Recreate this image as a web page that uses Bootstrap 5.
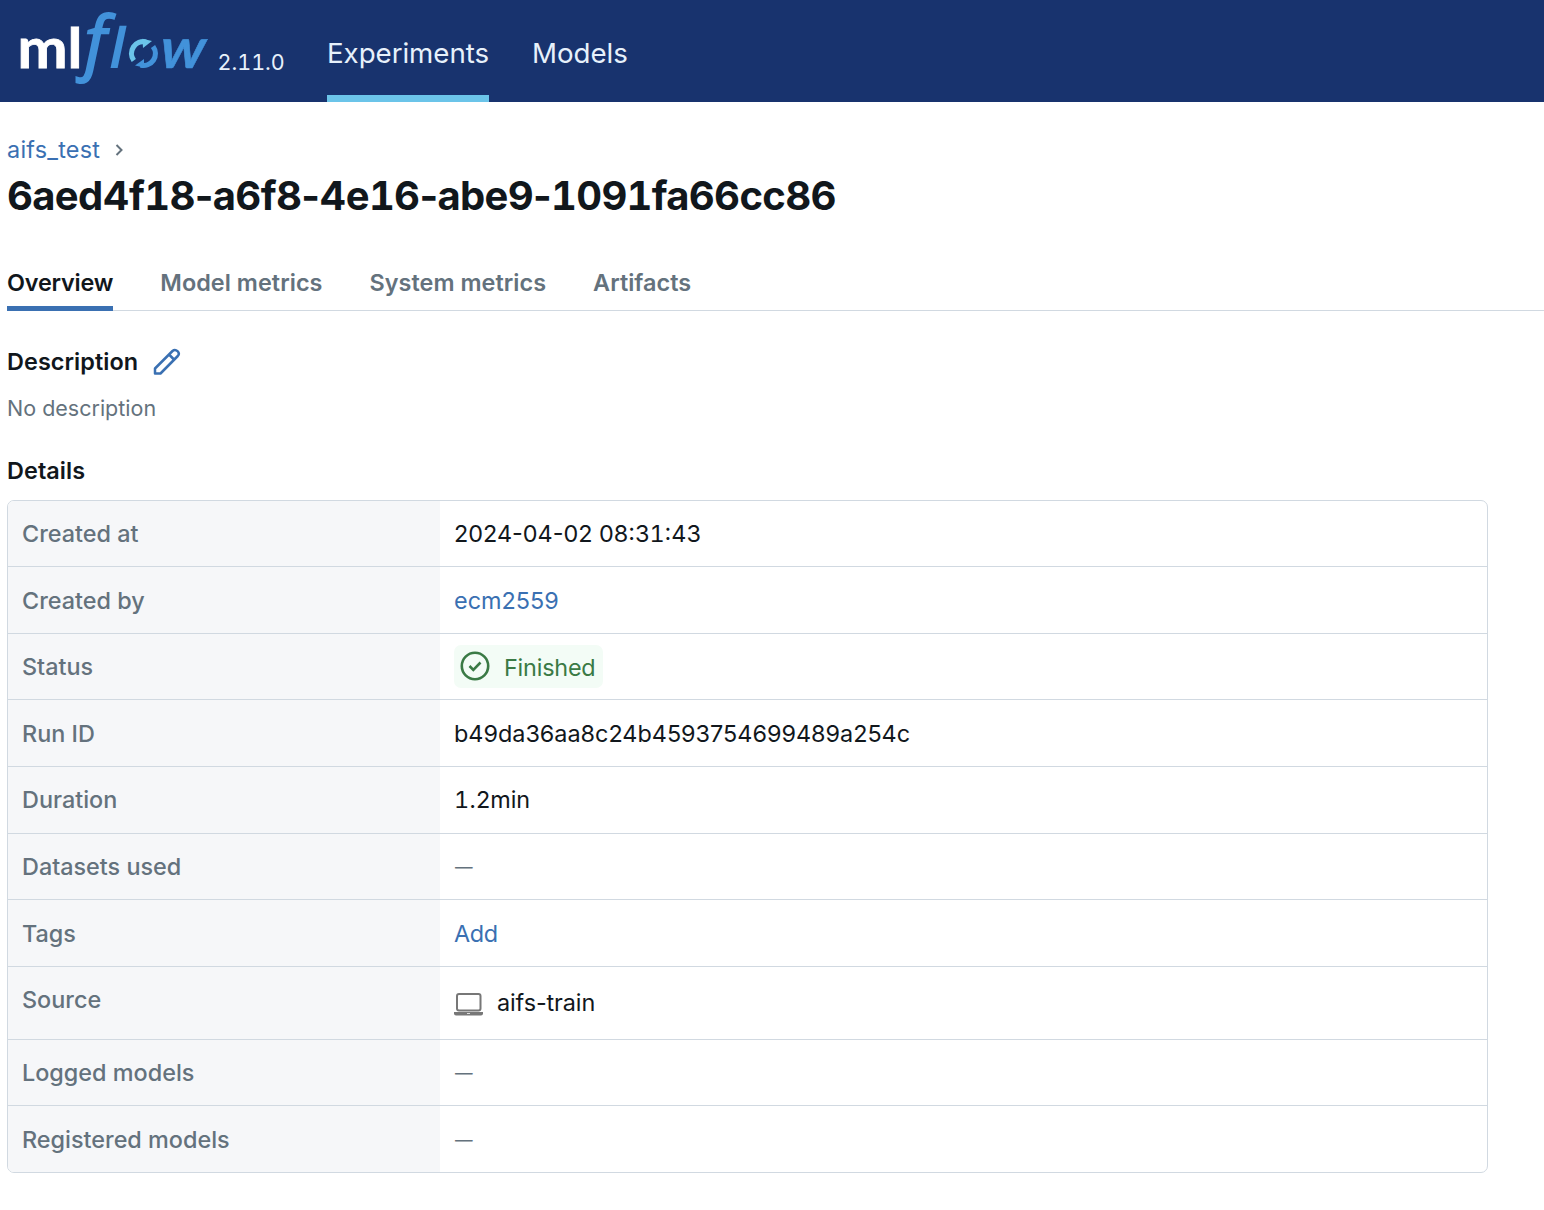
<!DOCTYPE html>
<html lang="en">
<head>
<meta charset="utf-8">
<meta name="viewport" content="width=device-width, initial-scale=1">
<title>MLflow run</title>
<link href="https://cdn.jsdelivr.net/npm/bootstrap@5.3.0/dist/css/bootstrap.min.css" rel="stylesheet">
<style>
body{font-family:Inter,"Liberation Sans",sans-serif;font-size:23.4px;line-height:32px;color:#11171c;background:#fff;overflow:hidden}
a{color:#3a70b2;text-decoration:none}
.tn{font-variant-numeric:tabular-nums}
.topbar{height:102px;background:#18336e}
.logo-art{width:210px;height:102px;overflow:visible}
.version{font-size:21.5px;color:#e7f1fb;margin-left:7.500px;padding-top:21px;width:109.500px}
.topbar .nav-link{height:102px;padding:0;line-height:106px;font-size:27.7px;color:#e7f1fb;margin-right:43px;letter-spacing:-.05px}
.topbar .nav-link.active{box-shadow:inset 0 -7px #6bc4e9}
.page{padding:32px 0 0 7px}
.crumb{letter-spacing:.25px}
.crumb-sep{margin-left:15px}
.run-title{font-size:40px;font-weight:700;line-height:48px;margin:6px 0 0;letter-spacing:-.67px}
.run-tabs{margin-top:47px;height:44px;border-bottom:1px solid #d1d9e1;gap:47px}
.run-tabs .nav-link{padding:0;height:44px;font-weight:600;color:#64727d;line-height:31px;letter-spacing:.05px}
.run-tabs .nav-link.active{color:#11171c;box-shadow:inset 0 -5px #3a70b2;letter-spacing:-.18px}
.desc-head{margin-top:35px;gap:15px}
.heading{font-size:23.4px;line-height:32px;font-weight:600;margin:0;letter-spacing:.08px}
.no-desc{font-size:21.5px;margin-top:14px}
.details-head{margin-top:31px}
.muted{color:#64727d}
.details{width:1481px;margin-top:12.6px;border:1px solid #d1d9e1;border-radius:7px;overflow:hidden}
.details-row{height:66.6px;border-bottom:1px solid #d1d9e1}
.details-row:last-child{border-bottom:0;height:66px}
.details-row.tall{height:73px}
.key{width:432px;background:#f6f7f9;color:#64727d;font-weight:500;padding:17.4px 0 0 14px}
.val{padding:1.2px 0 0 14px}
.dash{font-size:17.6px;padding-left:15px}
.add{letter-spacing:-.3px}
.status-cell{padding-top:0;padding-bottom:1px}
.status{height:43px;width:149px;background:#f3fcf6;color:#3a7a45;border-radius:7px;padding-left:6px;gap:14px;letter-spacing:-.2px}
.status-label{padding-top:3px}
.source{gap:14px;letter-spacing:-.1px}
.laptop{margin-top:2px}
</style>
</head>
<body>
<header class="topbar d-flex">
<svg class="logo-art flex-shrink-0" viewBox="0 0 210 102" role="img" aria-label="mlflow">
<text x="17.500" y="68" font-family="Lato" font-weight="700" font-size="56" fill="#fff" stroke="#fff" stroke-width=".8" textLength="65" lengthAdjust="spacingAndGlyphs">ml</text>
<text x="84.500" y="66" font-family="Open Sans" font-style="italic" font-size="70" fill="#4292da" stroke="#4292da" stroke-width="2">f</text>
<text transform="translate(107 68) skewX(-12)" font-family="Lato" font-weight="700" font-size="57" fill="#4292da">l</text>
<g fill="none" stroke-width="5.200"><path d="M133.800 60.500A11.800 11.800 0 0 1 146 42" stroke="#6bc4e9"/><path d="M153 46.500A11.800 11.800 0 0 1 140.500 65" stroke="#4292da"/></g>
<path d="M142.500 38.800 152 41 143 48Z" fill="#6bc4e9"/><path d="M144 59V67.500L135 65.500Z" fill="#4292da"/>
<text transform="translate(157 68) skewX(-12)" font-family="Lato" font-weight="700" font-size="56" fill="#4292da" stroke="#4292da" stroke-width=".6">w</text>
</svg>
<div class="version tn d-flex align-items-center">2.11.0</div>
<nav class="nav flex-nowrap"><a class="nav-link active" href="#">Experiments</a><a class="nav-link" href="#">Models</a></nav>
</header>
<main class="page">
<div class="d-flex align-items-center"><a class="crumb" href="#">aifs_test</a>
<svg class="crumb-sep" width="9" height="12" viewBox="0 0 9 12"><path d="M1.500 1 6.500 6 1.500 11" fill="none" stroke="#64727d" stroke-width="2"/></svg></div>
<h1 class="run-title">6aed4f<span class="tn">1</span>8-a6f8-4e<span class="tn">1</span>6-abe9-<span class="tn">1091</span>fa66cc86</h1>
<nav class="run-tabs nav"><a class="nav-link active" href="#">Overview</a><a class="nav-link" href="#">Model metrics</a><a class="nav-link" href="#">System metrics</a><a class="nav-link" href="#">Artifacts</a></nav>
<div class="desc-head d-flex align-items-center"><h2 class="heading">Description</h2>
<svg width="28" height="28" viewBox="0 0 28 28" fill="none" stroke="#3a70b2" stroke-width="2.500" stroke-linejoin="round"><path d="M2 20.500 19.500 3Q22 .8 24.500 3.200T24.800 8L7.500 25.500H2ZM16 6.500 21.500 12"/></svg></div>
<p class="muted mb-0 no-desc">No description</p>
<h2 class="heading details-head">Details</h2>
<section class="details">
<div class="details-row d-flex"><div class="key">Created at</div><div class="val d-flex align-items-center"><span>2024-04-02 08:3<span class="tn">1</span>:43</span></div></div>
<div class="details-row d-flex"><div class="key">Created by</div><div class="val d-flex align-items-center"><a href="#">ecm2559</a></div></div>
<div class="details-row d-flex"><div class="key">Status</div><div class="val status-cell d-flex align-items-center"><span class="status d-flex align-items-center"><svg width="30" height="30" viewBox="0 0 30 30" fill="none" stroke="currentColor" stroke-width="2.600"><circle cx="15" cy="15" r="13.200"/><path d="M9.500 15 13.300 18.800 20.500 11.500"/></svg><span class="status-label">Finished</span></span></div></div>
<div class="details-row d-flex"><div class="key">Run ID</div><div class="val d-flex align-items-center">b49da36aa8c24b4593754699489a254c</div></div>
<div class="details-row d-flex"><div class="key">Duration</div><div class="val d-flex align-items-center"><span><span class="tn">1</span>.2min</span></div></div>
<div class="details-row d-flex"><div class="key">Datasets used</div><div class="val muted dash d-flex align-items-center">—</div></div>
<div class="details-row d-flex"><div class="key">Tags</div><div class="val d-flex align-items-center"><a class="add" href="#">Add</a></div></div>
<div class="details-row tall d-flex"><div class="key">Source</div><div class="val source d-flex align-items-center"><svg class="laptop" width="29" height="23" viewBox="0 0 29 23"><rect x="3" y="1" width="23.500" height="16.500" rx="2" fill="none" stroke="#777" stroke-width="2"/><path d="M0 19H29V20.500Q29 22.500 27 22.500H2Q0 22.500 0 20.500Z" fill="#777"/><path d="M13 20.500H16" stroke="#ddd"/></svg>aifs-train</div></div>
<div class="details-row d-flex"><div class="key">Logged models</div><div class="val muted dash d-flex align-items-center">—</div></div>
<div class="details-row d-flex"><div class="key">Registered models</div><div class="val muted dash d-flex align-items-center">—</div></div>
</section>
</main>
<script src="https://cdn.jsdelivr.net/npm/bootstrap@5.3.0/dist/js/bootstrap.bundle.min.js"></script>
</body>
</html>
